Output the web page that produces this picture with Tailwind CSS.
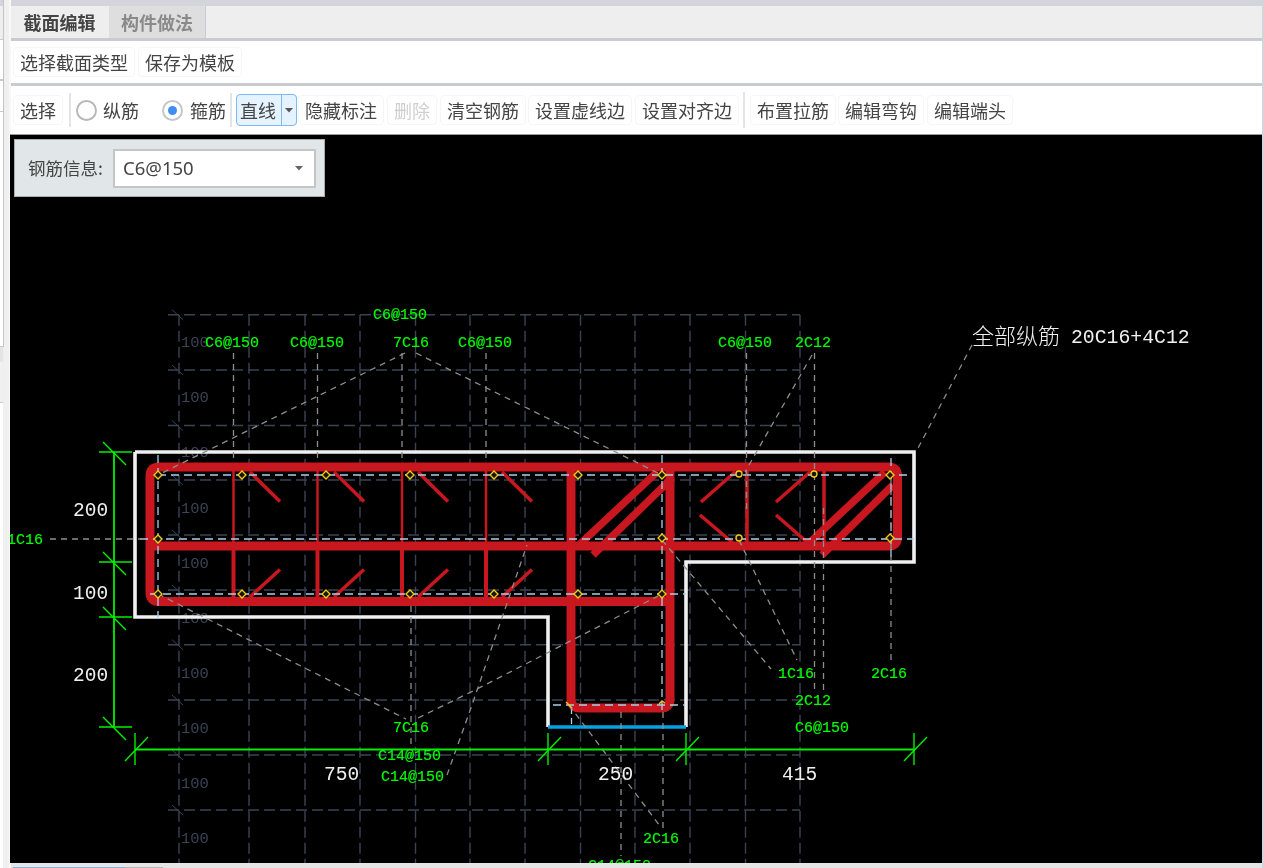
<!DOCTYPE html>
<html lang="zh">
<head>
    <meta charset="UTF-8">
    <title>截面编辑</title>
    <script src="https://cdn.jsdelivr.net/npm/@tailwindcss/browser@4"></script>
</head>
<body class="m-0 bg-[#eeeeee] overflow-hidden">
<div class="w-[1264px] h-[868px] flex overflow-hidden blur-[0.4px] text-[18px] leading-none text-[#444] font-['Noto_Sans_CJK_SC','Noto_Sans',sans-serif]">

    <!-- 左側の隣パネルの端 -->
    <div class="w-[11px] h-full flex shrink-0">
        <div class="w-[3px] h-full flex flex-col">
            <div class="h-[6px] bg-[#d3d5da]"></div>
            <div class="h-[34px] bg-[#eeeeee] border-b border-[#c9cbd0]"></div>
            <div class="h-[41px] bg-white border-b-2 border-[#c9cbd0]"></div>
            <div class="h-[31px] bg-white border-b border-[#c9cbd0]"></div>
            <div class="h-[235px] bg-white border-b border-[#c9cbd0]"></div>
            <div class="h-[15px] bg-[#e4e5e8]"></div>
            <div class="h-[41px] bg-[#f0f0f0] border-b border-[#c9cbd0]"></div>
            <div class="flex-1 bg-white"></div>
        </div>
        <div class="w-[1px] h-[347px] bg-[#c4c4c4]"></div>
        <div class="flex-1 bg-[#f0f0f0] border-r-2 border-[#f8f8f8]"></div>
    </div>

    <!-- メイン -->
    <div class="flex-1 min-w-0 h-full flex flex-col pr-[2px] bg-[#d3d5da]">
        <div class="h-[6px] shrink-0"></div>

        <!-- タブ -->
        <div class="h-[32px] shrink-0 pl-[1px] flex bg-[#eeeeee]">
            <div class="w-[95px] flex items-center justify-center font-bold bg-[#eeeeee]">截面编辑</div>
            <div class="ml-[2px] w-[97px] flex items-center justify-center font-bold text-[#8a8a8a] bg-[#dedede] border-r border-[#c9cbd0]">构件做法</div>
        </div>
        <div class="h-[3px] shrink-0 bg-[#c9cbd0]"></div>

        <!-- 操作行1 -->
        <div class="h-[42px] shrink-0 pl-[2px] flex items-center gap-[3px] bg-white">
            <div class="h-[30px] px-[6px] flex items-center border border-[#f6f6f6] rounded-[4px]">选择截面类型</div>
            <div class="h-[30px] px-[6px] flex items-center border border-[#f6f6f6] rounded-[4px]">保存为模板</div>
        </div>
        <div class="h-[3px] shrink-0 bg-[#c9cbd0]"></div>

        <!-- 操作行2 -->
        <div class="h-[48px] shrink-0 pl-[2px] flex items-center gap-[3px] bg-white">
            <div class="h-[30px] px-[6px] flex items-center border border-[#f6f6f6] rounded-[4px]">选择</div>
            <div class="ml-[3px] w-[2px] h-[34px] bg-[#e4e4e4]"></div>
            <div class="ml-[2px] w-[21px] h-[21px] rounded-full border-2 border-[#b8b8b8] bg-white"></div>
            <div class="ml-[3px]">纵筋</div>
            <div class="ml-[20px] w-[21px] h-[21px] rounded-full border-2 border-[#c4c8cc] bg-white flex items-center justify-center">
                <div class="w-[9px] h-[9px] rounded-full bg-[#3d8ff0]"></div>
            </div>
            <div class="ml-[4px]">箍筋</div>
            <div class="ml-[1px] w-[2px] h-[34px] bg-[#e4e4e4]"></div>
            <div class="ml-[1px] w-[61px] h-[32px] flex border border-[#7db9f2] bg-[#e5f2ff] rounded-[4px]">
                <div class="w-[45px] pr-[2px] flex items-center justify-center border-r border-[#7db9f2]">直线</div>
                <div class="flex-1 flex items-center justify-center">
                    <svg width="8" height="5" viewBox="0 0 8 5"><polygon points="0,0 8,0 4,4.5" fill="#555"></polygon></svg>
                </div>
            </div>
            <div class="-ml-[2px] h-[30px] px-[6px] flex items-center border border-[#f6f6f6] rounded-[4px]">隐藏标注</div>
            <div class="h-[30px] px-[6px] flex items-center border border-[#f6f6f6] rounded-[4px] text-[#cfcfcf]">删除</div>
            <div class="h-[30px] px-[6px] flex items-center border border-[#f6f6f6] rounded-[4px]">清空钢筋</div>
            <div class="-ml-[1px] h-[30px] px-[6px] flex items-center border border-[#f6f6f6] rounded-[4px]">设置虚线边</div>
            <div class="h-[30px] px-[6px] flex items-center border border-[#f6f6f6] rounded-[4px]">设置对齐边</div>
            <div class="ml-[1px] w-[2px] h-[36px] bg-[#e4e4e4]"></div>
            <div class="ml-[2px] h-[30px] px-[6px] flex items-center border border-[#f6f6f6] rounded-[4px]">布置拉筋</div>
            <div class="-ml-[1px] h-[30px] px-[6px] flex items-center border border-[#f6f6f6] rounded-[4px]">编辑弯钩</div>
            <div class="h-[30px] px-[6px] flex items-center border border-[#f6f6f6] rounded-[4px]">编辑端头</div>
        </div>

        <!-- 描画エリア -->
        <div class="relative -ml-[1px] flex-1 min-h-0 bg-black overflow-hidden border-t border-[#9a9a9a]">
            <svg id="canvas" class="absolute left-0 top-0 block" width="1252" height="728" viewBox="10 135 1252 728"></svg>
            <div class="absolute left-[4px] top-[4px] w-[311px] h-[58px] flex items-center bg-[#e1e7e9] border border-[#a8acae]">
                <div class="ml-[13px] w-[85px] text-[17.5px] whitespace-nowrap">钢筋信息:</div>
                <div class="w-[203px] h-[39px] flex items-center justify-between pl-[8px] pr-[11px] bg-white border-2 border-[#c4c6c6] text-[18.5px] font-['Noto_Sans',sans-serif]">
                    <span>C6@150</span>
                    <svg width="8" height="5" viewBox="0 0 8 5"><polygon points="0,0 8,0 4,4.5" fill="#666"></polygon></svg>
                </div>
            </div>
        </div>

        <!-- 下のスクロールバー -->
        <div class="h-[5px] shrink-0 flex items-end bg-[#e5e5e5]">
            <div class="ml-[2px] w-[112px] h-[1px] bg-[#7cb8e8]"></div>
            <div class="w-[38px] h-[1px] bg-[#b8b8b8]"></div>
        </div>
    </div>
</div>

<script>
    const svg = document.getElementById('canvas');
    let out = '';

    const GRID = '#3a4355', GREEN = '#00f000', WHITE = '#f0f0f0', RED = '#c8171f', LEADER = '#8e8e8e', BLUE = '#a9cfea';

    function line(x1, y1, x2, y2, color, width = 1, dash = '') {
        out += `<line x1="${x1}" y1="${y1}" x2="${x2}" y2="${y2}" stroke="${color}" stroke-width="${width}"${dash ? ` stroke-dasharray="${dash}"` : ''}/>`;
    }
    function poly(points, color, width = 1, dash = '') {
        out += `<polyline points="${points}" fill="none" stroke="${color}" stroke-width="${width}"${dash ? ` stroke-dasharray="${dash}"` : ''}/>`;
    }
    function path(d, color, width) {
        out += `<path d="${d}" fill="none" stroke="${color}" stroke-width="${width}"/>`;
    }
    function label(x, y, s, color = '#00ff00', size = 15, bold = 0.2) {
        out += `<text x="${x}" y="${y}" fill="${color}" stroke="${color}" stroke-width="${bold}" font-size="${size}" font-family="'Liberation Mono', monospace">${s}</text>`;
    }

    // グリッド
    const gridX = [179, 249, 305, 360, 415.5, 470, 525, 580.5, 635, 690, 745.5, 800];
    const gridY = [314.7, 370, 425.5, 480, 535, 590, 644.7, 700, 755, 810];
    gridY.forEach(y => {
        line(168, y, 800, y, GRID, 1.4, '11 5');
        line(172, y - 5, 183, y + 5, GRID, 1);
    });
    gridX.forEach(x => line(x, 314.7, x, 863, GRID, 1.4, '11 5'));
    [342, 397, 452, 508, 563, 618, 673, 728, 783, 838].forEach(y => label(181, y + 5, '100', GRID, 15.5, 0));

    // 外形
    poly('135,452 914,452 914,562 686,562 686,727', WHITE, 3.6);
    poly('548,727 548,617 135,617 135,452', WHITE, 3.6);
    line(548, 727, 686, 727, '#00a4e4', 3.6);

    // 引出し線(赤の下)
    [233.5, 317.5, 402, 486, 746.5].forEach(x => line(x, 353, x, 470, LEADER, 1.3, '6 5'));

    // 主筋の帯
    path('M159 601.5 Q150 601.5 150 592.5 V476 Q150 467 159 467 H888.5 Q897.5 467 897.5 476 V537 Q897.5 546 888.5 546 H150', RED, 9);
    path('M159 601.5 H674', RED, 9);
    path('M571 467 V699 Q571 708 580 708 H661 Q670 708 670 699 V467', RED, 9);

    // 細い縦筋
    [233.5, 317.5, 402, 486].forEach(x => {
        line(x, 467, x, 546, RED, 2.5);
        line(x, 546, x, 601, RED, 4);
    });
    line(747, 467, 747, 546, RED, 3.5);
    line(824, 470, 824, 546, RED, 3.5);

    // フック
    [0, 84, 168, 252].forEach(d => {
        line(250 + d, 472, 280 + d, 501.5, RED, 3.5);
        line(250 + d, 597, 280 + d, 569.5, RED, 3.5);
    });
    line(735, 472, 701, 502, RED, 3.5);
    line(700, 515, 733, 543, RED, 3.5);
    line(810, 472, 776, 502, RED, 3.5);
    line(776, 515, 808, 543, RED, 3.5);

    // 太い斜め筋
    line(657, 472, 580, 544, RED, 7.5);
    line(668, 482, 593, 555, RED, 7.5);
    line(885, 472, 808, 544, RED, 7.5);
    line(893, 485, 822, 555, RED, 7.5);

    // 破線(鉄筋中心)
    line(158, 475, 912, 475, BLUE, 1.3, '8 5');
    line(140, 539, 914, 539, BLUE, 1.3, '8 5');
    line(150, 594, 686, 594, BLUE, 1.3, '8 5');
    line(553, 705, 685, 705, BLUE, 1.3, '8 5');
    line(158, 455, 158, 620, BLUE, 1.3, '8 5');
    line(662, 455, 662, 712, BLUE, 1.3, '8 5');
    line(571.5, 708, 571.5, 727, BLUE, 1.3, '6 4');
    line(891, 458, 891, 560, BLUE, 1.3, '8 5');

    // 引出し線
    line(50, 539, 145, 539, LEADER, 1.3, '6 5');
    line(405, 353, 158, 475, LEADER, 1.3, '6 5');
    line(416, 353, 662, 475, LEADER, 1.3, '6 5');
    line(158, 594, 406, 719, LEADER, 1.3, '6 5');
    poly('418,718 475,690 662,594', LEADER, 1.3, '6 5');
    poly('447,775 472,705 527,545', LEADER, 1.3, '6 5');
    line(812, 355, 745, 472, LEADER, 1.3, '6 5');
    line(972, 345, 916, 452, LEADER, 1.3, '6 5');
    line(662, 540, 771, 669, LEADER, 1.3, '6 5');
    line(739, 540, 797, 660, LEADER, 1.3, '6 5');
    line(569, 705, 660, 826, LEADER, 1.3, '6 5');
    line(746.5, 470, 746.5, 510, LEADER, 1.3, '6 5');
    line(814.5, 353, 814.5, 690, LEADER, 1.3, '6 5');
    line(823.5, 508, 823.5, 690, LEADER, 1.3, '6 5');
    line(891, 478, 891, 660, LEADER, 1.3, '6 5');
    line(411, 606, 411, 750, LEADER, 1.3, '6 5');
    line(621, 712, 621, 856, LEADER, 1.3, '6 5');
    line(663, 712, 663, 830, LEADER, 1.3, '6 5');

    // 鉄筋の点(左は菱形、右上は丸)
    const dots = [[158, 475], [242, 475], [326, 475], [410, 475], [494, 475], [578, 475], [662, 475], [890, 475],
        [158, 539], [662, 538], [890, 538],
        [158, 594], [242, 594], [326, 594], [410, 594], [494, 594], [578, 594], [662, 594]];
    dots.forEach(([x, y]) => {
        out += `<polygon points="${x},${y - 4} ${x + 4},${y} ${x},${y + 4} ${x - 4},${y}" fill="#1a1408" stroke="#eccb1e" stroke-width="1.4"/>`;
    });
    [[739, 474], [814, 474], [739, 538]].forEach(([x, y]) => {
        out += `<circle cx="${x}" cy="${y}" r="3" fill="#1a1408" stroke="#eccb1e" stroke-width="1.4"/>`;
    });
    poly('566,702 569,705 572,708', '#eccb1e', 1.4);
    poly('659,704 662,701 665,703', '#eccb1e', 1.4);

    // 寸法線
    line(114, 452, 114, 727, GREEN, 1.8);
    [452, 562, 617, 727].forEach(y => {
        line(99, y, 132, y, GREEN, 1.4);
        line(103, y - 10, 126, y + 13, GREEN, 1.4);
    });
    line(135, 749.5, 914, 749.5, GREEN, 1.8);
    [135, 548, 686, 914].forEach(x => {
        line(x, 733, x, 765, GREEN, 1.4);
        line(x - 10, 761, x + 13, 737, GREEN, 1.4);
    });

    // 寸法・ラベル
    [[373, 319, 'C6@150'], [205, 347, 'C6@150'], [290, 347, 'C6@150'], [393, 347, '7C16'], [458, 347, 'C6@150'],
     [718, 347, 'C6@150'], [795, 347, '2C12'], [7, 544, '1C16'], [393, 732, '7C16'], [378, 760, 'C14@150'],
     [381, 781, 'C14@150'], [778, 678, '1C16'], [871, 678, '2C16'], [795, 705, '2C12'], [795, 732, 'C6@150'],
     [643, 843, '2C16'], [588, 870, 'C14@150']].forEach(([x, y, s]) => label(x, y, s));

    [[73, 516, '200'], [73, 599, '100'], [73, 681, '200'], [324, 780, '750'], [598, 780, '250'], [782, 780, '415']]
        .forEach(([x, y, s]) => label(x, y, s, WHITE, 19.5, 0));
    out += `<text x="972" y="344" fill="${WHITE}" font-size="22" font-family="'Noto Sans CJK SC', sans-serif" font-weight="300">全部纵筋</text>`;
    label(1071, 343, '20C16+4C12', WHITE, 19.8, 0);

    svg.innerHTML = out;
</script>
</body>
</html>
